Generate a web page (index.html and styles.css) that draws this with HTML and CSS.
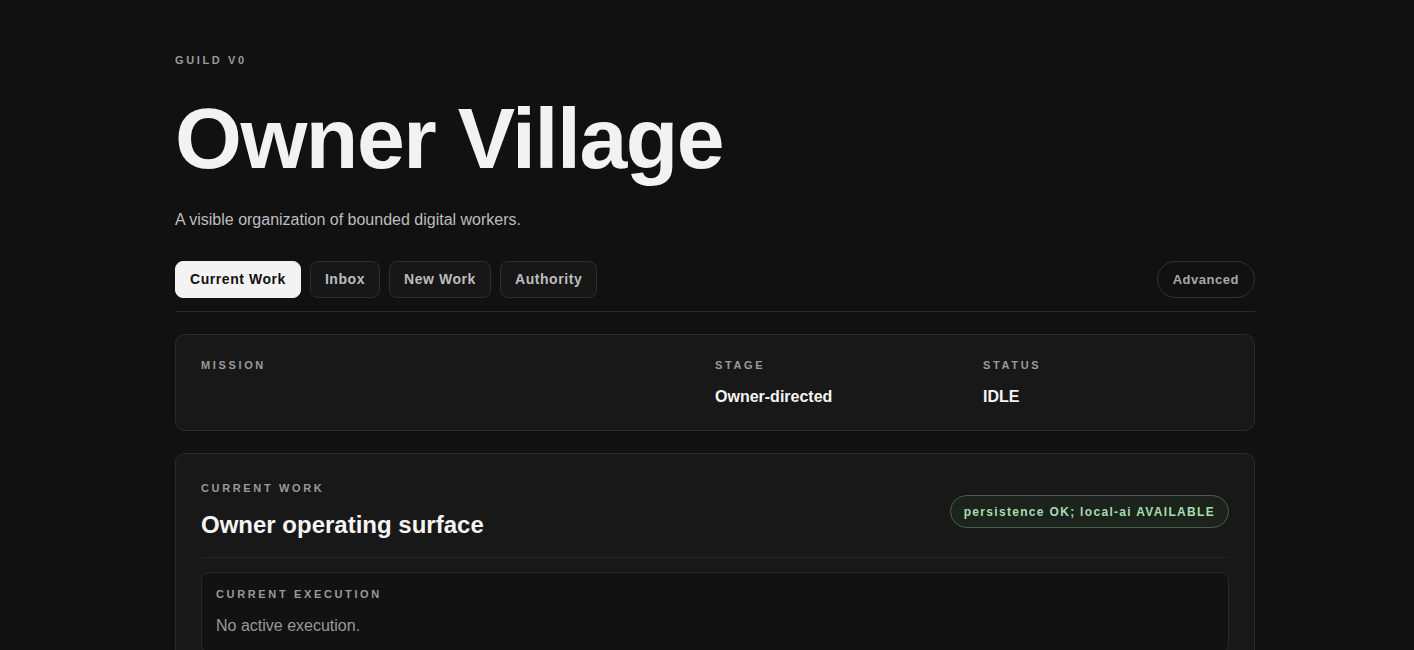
FILE: index.html
```html
<!DOCTYPE html>
<html lang="en">
<head>
<meta charset="utf-8">
<title>Owner Village</title>
<link rel="stylesheet" href="styles.css">
</head>
<body>
<main class="page">
  <header class="hero">
    <p class="eyebrow">GUILD V0</p>
    <h1 class="title">Owner Village</h1>
    <p class="subtitle">A visible organization of bounded digital workers.</p>
  </header>

  <nav class="nav">
    <div class="tabs">
      <button class="tab tab-active">Current Work</button>
      <button class="tab">Inbox</button>
      <button class="tab">New Work</button>
      <button class="tab">Authority</button>
    </div>
    <button class="advanced">Advanced</button>
  </nav>

  <section class="card summary">
    <div class="field">
      <div class="label">MISSION</div>
      <div class="value"></div>
    </div>
    <div class="field">
      <div class="label">STAGE</div>
      <div class="value">Owner-directed</div>
    </div>
    <div class="field">
      <div class="label">STATUS</div>
      <div class="value">IDLE</div>
    </div>
  </section>

  <section class="card work">
    <div class="work-head">
      <div class="work-titles">
        <div class="label">CURRENT WORK</div>
        <h2 class="work-title">Owner operating surface</h2>
      </div>
      <span class="badge">persistence OK; local-ai AVAILABLE</span>
    </div>
    <div class="exec">
      <div class="label">CURRENT EXECUTION</div>
      <p class="muted">No active execution.</p>
    </div>
  </section>
</main>
</body>
</html>
```

FILE: styles.css
```css
* { box-sizing: border-box; }

html, body {
  margin: 0;
  padding: 0;
  background: #111111;
  color: #f2f2f2;
  font-family: "Liberation Sans", Arial, sans-serif;
}

.page {
  width: 1080px;
  margin-left: calc(50% - 532px);
  padding: 53px 0 60px;
}

.eyebrow {
  margin: 0;
  font-size: 11px;
  line-height: 14px;
  font-weight: 700;
  letter-spacing: 0.24em;
  color: #9a9a9a;
}

.title {
  margin: 28px 0 0;
  font-size: 86px;
  line-height: 86px;
  font-weight: 700;
  letter-spacing: -0.017em;
  color: #f2f2f2;
}

.subtitle {
  margin: 29px 0 0;
  font-size: 16px;
  line-height: 20px;
  color: #bdbdbd;
}

.nav {
  margin-top: 31px;
  display: flex;
  justify-content: space-between;
  align-items: center;
  padding-bottom: 13px;
  border-bottom: 1px solid #2a2a2a;
}

.tabs {
  display: flex;
  gap: 9px;
}

.tab {
  font-family: "Liberation Sans", Arial, sans-serif;
  font-size: 14px;
  line-height: 17px;
  font-weight: 700;
  letter-spacing: 0.04em;
  padding: 9px 14px;
  border-radius: 8px;
  border: 1px solid #2e2e2e;
  background: #171717;
  color: #bdbdbd;
  cursor: pointer;
}

.tab-active {
  background: #f3f3f3;
  border-color: #f3f3f3;
  color: #111111;
}

.advanced {
  font-family: "Liberation Sans", Arial, sans-serif;
  font-size: 13px;
  line-height: 17px;
  font-weight: 700;
  letter-spacing: 0.04em;
  padding: 9px 15px;
  border-radius: 999px;
  border: 1px solid #313131;
  background: transparent;
  color: #a8a8a8;
  cursor: pointer;
}

.card {
  margin-top: 22px;
  background: #181818;
  border: 1px solid #2c2c2c;
  border-radius: 10px;
}

.summary {
  display: grid;
  grid-template-columns: 2fr 1fr 1fr;
  column-gap: 22px;
  padding: 23px 25px;
}

.label {
  font-size: 11px;
  line-height: 14px;
  font-weight: 700;
  letter-spacing: 0.24em;
  color: #9a9a9a;
}

.value {
  margin-top: 14.5px;
  font-size: 16px;
  line-height: 20px;
  font-weight: 700;
  color: #f5f5f5;
  min-height: 20px;
}

.work {
  padding: 27px 25px 25px;
}

.work-head {
  display: flex;
  justify-content: space-between;
  align-items: center;
  padding-bottom: 18px;
  border-bottom: 1px solid #262626;
}

.work-title {
  margin: 15px 0 0;
  font-size: 24px;
  line-height: 29px;
  font-weight: 700;
  color: #f5f5f5;
}

.badge {
  margin-top: 4px;
  font-size: 12px;
  line-height: 14px;
  font-weight: 700;
  letter-spacing: 0.11em;
  padding: 8.5px 13px;
  border-radius: 999px;
  border: 1px solid #46604b;
  background: #1c231d;
  color: #a8dcb0;
  white-space: nowrap;
}

.exec {
  margin-top: 14px;
  padding: 14px 14px 16px;
  background: #121212;
  border: 1px solid #2a2a2a;
  border-radius: 8px;
}

.muted {
  margin: 15px 0 0;
  font-size: 16px;
  line-height: 20px;
  color: #999999;
}
```
